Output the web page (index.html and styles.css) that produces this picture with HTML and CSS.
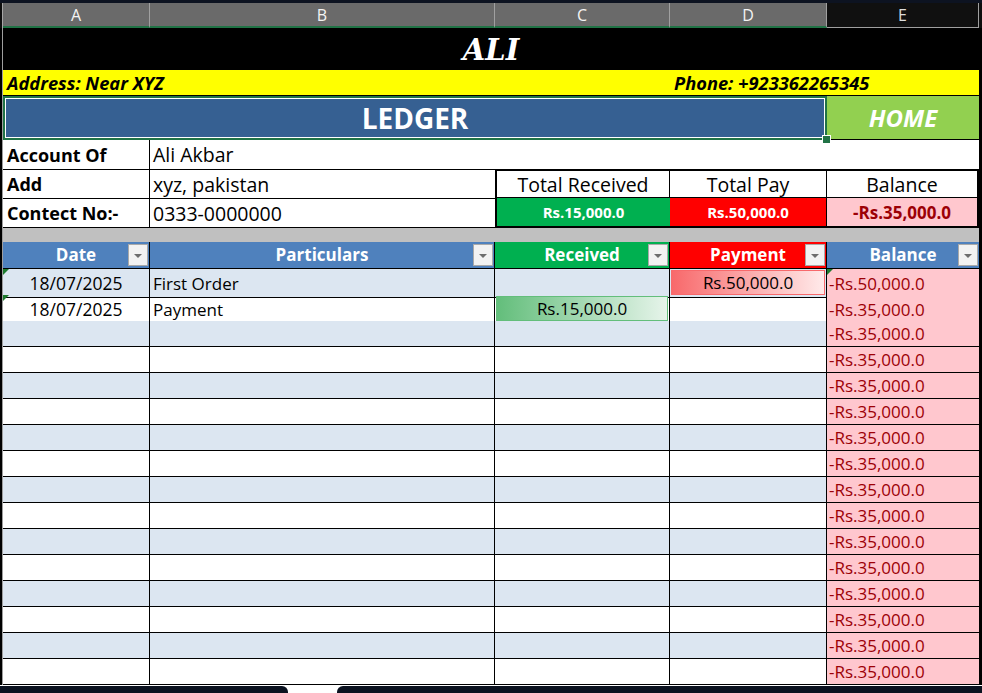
FILE: index.html
```html
<!DOCTYPE html>
<html>
<head>
<meta charset="utf-8">
<link rel="stylesheet" href="styles.css">
</head>
<body>
<div class="topstrip"></div>
<div class="colbar">
  <div class="colheads grid5">
    <div class="ch">A</div><div class="ch">B</div><div class="ch">C</div><div class="ch">D</div><div class="ch ch-e">E</div>
  </div>
</div>
<div class="sheet">
  <div class="title">ALI</div>
  <div class="info grid5">
    <div class="addr">Address: Near XYZ</div>
    <div class="phone">Phone: +923362265345</div>
  </div>
  <div class="banner grid5">
    <div class="ledger">LEDGER</div>
    <div class="home">HOME</div>
  </div>
  <div class="acct grid5">
    <div class="lab">Account Of</div><div class="val val-top">Ali Akbar</div><div class="blank"></div>
    <div class="lab">Add</div><div class="val">xyz, pakistan</div>
    <div class="totals">
      <div class="tc h">Total Received</div>
      <div class="tc h">Total Pay</div>
      <div class="tc h">Balance</div>
      <div class="tc tv-g">Rs.15,000.0</div>
      <div class="tc tv-r">Rs.50,000.0</div>
      <div class="tc tv-p">-Rs.35,000.0</div>
    </div>
    <div class="lab">Contect No:-</div><div class="val">0333-0000000</div>
  </div>
  <div class="gap"></div>
  <div class="thead grid5">
    <div class="th th-blue">Date<span class="filt"></span></div>
    <div class="th th-blue">Particulars<span class="filt"></span></div>
    <div class="th th-green">Received<span class="filt"></span></div>
    <div class="th th-red">Payment<span class="filt"></span></div>
    <div class="th th-blue">Balance<span class="filt"></span></div>
  </div>
  <div class="row grid5 alt">
    <div class="c c-date flag">18/07/2025</div><div class="c c-part">First Order</div><div class="c"></div>
    <div class="c"><div class="bar bar-red">Rs.50,000.0</div></div>
    <div class="c c-bal flag">-Rs.50,000.0</div>
  </div>
  <div class="row grid5 soft">
    <div class="c c-date flag">18/07/2025</div><div class="c c-part">Payment</div>
    <div class="c"><div class="bar bar-green">Rs.15,000.0</div></div>
    <div class="c"></div>
    <div class="c c-bal">-Rs.35,000.0</div>
  </div>
  <div class="row grid5 alt"><div class="c"></div><div class="c"></div><div class="c"></div><div class="c"></div><div class="c c-bal">-Rs.35,000.0</div></div>
  <div class="row grid5"><div class="c"></div><div class="c"></div><div class="c"></div><div class="c"></div><div class="c c-bal">-Rs.35,000.0</div></div>
  <div class="row grid5 alt"><div class="c"></div><div class="c"></div><div class="c"></div><div class="c"></div><div class="c c-bal">-Rs.35,000.0</div></div>
  <div class="row grid5"><div class="c"></div><div class="c"></div><div class="c"></div><div class="c"></div><div class="c c-bal">-Rs.35,000.0</div></div>
  <div class="row grid5 alt"><div class="c"></div><div class="c"></div><div class="c"></div><div class="c"></div><div class="c c-bal">-Rs.35,000.0</div></div>
  <div class="row grid5"><div class="c"></div><div class="c"></div><div class="c"></div><div class="c"></div><div class="c c-bal">-Rs.35,000.0</div></div>
  <div class="row grid5 alt"><div class="c"></div><div class="c"></div><div class="c"></div><div class="c"></div><div class="c c-bal">-Rs.35,000.0</div></div>
  <div class="row grid5"><div class="c"></div><div class="c"></div><div class="c"></div><div class="c"></div><div class="c c-bal">-Rs.35,000.0</div></div>
  <div class="row grid5 alt"><div class="c"></div><div class="c"></div><div class="c"></div><div class="c"></div><div class="c c-bal">-Rs.35,000.0</div></div>
  <div class="row grid5"><div class="c"></div><div class="c"></div><div class="c"></div><div class="c"></div><div class="c c-bal">-Rs.35,000.0</div></div>
  <div class="row grid5 alt"><div class="c"></div><div class="c"></div><div class="c"></div><div class="c"></div><div class="c c-bal">-Rs.35,000.0</div></div>
  <div class="row grid5"><div class="c"></div><div class="c"></div><div class="c"></div><div class="c"></div><div class="c c-bal">-Rs.35,000.0</div></div>
  <div class="row grid5 alt"><div class="c"></div><div class="c"></div><div class="c"></div><div class="c"></div><div class="c c-bal">-Rs.35,000.0</div></div>
  <div class="row grid5"><div class="c"></div><div class="c"></div><div class="c"></div><div class="c"></div><div class="c c-bal">-Rs.35,000.0</div></div>
</div>
<div class="tabs"><div class="tab-l"></div><div class="tab-r"></div></div>
</body>
</html>
```
FILE: styles.css
```css
* { box-sizing: border-box; margin: 0; padding: 0; }
html, body { background: #000; }
body {
  margin: 0;
  width: 982px;
  height: 693px;
  overflow: hidden;
  font-family: "Open Sans", "Noto Sans", sans-serif;
  color: #000;
}
.grid5 {
  display: grid;
  grid-template-columns: 147px 345px 175px 157px 152px;
}
.topstrip { height: 3px; background: #0d1321; }
.colbar { background: #0e0e0e; padding-left: 2px; height: 25px; }
.colheads { width: 977px; border-left: 1px solid #a6a6a6; height: 25px; }
.ch {
  height: 25px;
  background: #6a6a6a;
  color: #f4f4f4;
  font-size: 16px;
  line-height: 25px;
  text-align: center;
  border-right: 1px solid #a0a0a0;
  border-bottom: 2px solid #217346;
}
.ch-e {
  background: #101010;
  color: #dcdcdc;
  border-bottom: 1px solid #a0a0a0;
  border-right: 1px solid #a0a0a0;
}
.sheet {
  margin-left: 2px;
  width: 978px;
  border-left: 1px solid #9e9e9e;
  border-right: 1px solid #000;
  background: #fff;
}
.title {
  height: 42px;
  background: #000;
  color: #fff;
  font: italic 700 29px "DejaVu Serif", serif;
  line-height: 44px;
  text-align: center;
}
.info {
  height: 26px;
  background: #ffff00;
  border-bottom: 1px solid #000;
  font-weight: 700;
  font-style: italic;
  font-size: 18.3px;
  line-height: 25px;
}
.addr { grid-column: 1 / 4; padding-left: 4px; }
.phone { grid-column: 4 / 6; padding-left: 4px; }
.banner { height: 44px; }
.ledger {
  grid-column: 1 / 5;
  position: relative;
  z-index: 1;
  background: #366092;
  border: 2px solid #217346;
  box-shadow: inset 0 0 0 1px #fff;
  color: #fff;
  font-weight: 700;
  font-size: 28px;
  display: flex;
  align-items: center;
  justify-content: center;
}
.ledger::after {
  content: "";
  position: absolute;
  right: -6px;
  bottom: -6px;
  width: 7px;
  height: 7px;
  background: #217346;
  border: 1px solid #fff;
}
.home {
  background: #92d050;
  color: #fff;
  font-weight: 700;
  font-style: italic;
  font-size: 24px;
  display: flex;
  align-items: center;
  justify-content: center;
  border-bottom: 1px solid #000;
}
.acct { grid-template-rows: 30px 29px 29px; }
.lab {
  font-weight: 700;
  font-size: 18px;
  padding-left: 4px;
  border-right: 1px solid #000;
  border-bottom: 1px solid #000;
  display: flex;
  align-items: center;
}
.val {
  font-size: 19.5px;
  padding-left: 3px;
  border-bottom: 1px solid #000;
  display: flex;
  align-items: center;
}
.blank { grid-column: 3 / 6; }
.totals {
  grid-column: 3 / 6;
  grid-row: 2 / 4;
  margin-top: -1px;
  border: 2px solid #000;
  display: grid;
  grid-template-columns: 173px 157px 1fr;
  grid-template-rows: 27px 1fr;
}
.tc {
  display: flex;
  align-items: center;
  justify-content: center;
  border-right: 1px solid #000;
  font-size: 19.5px;
}
.tc:nth-child(3n) { border-right: 0; }
.tc.h { border-bottom: 1px solid #000; }
.tv-g { background: #00b050; color: #fff; font-weight: 700; font-size: 15px; border-right: 0; }
.tv-r { background: #ff0000; color: #fff; font-weight: 700; font-size: 15px; }
.tv-p { background: #ffc7ce; color: #9c0006; font-weight: 700; font-size: 17px; }
.gap { height: 14px; background: #c0c0c0; }
.thead { height: 27px; border-bottom: 1px solid #000; }
.th {
  position: relative;
  color: #fff;
  font-weight: 700;
  font-size: 17px;
  line-height: 26px;
  text-align: center;
  border-right: 1px solid #000;
}
.th:last-child { border-right: 0; }
.th-blue { background: #4f81bd; }
.th-green { background: #00b050; }
.th-red { background: #ff0000; }
.filt {
  position: absolute;
  right: 1px;
  top: 2px;
  width: 20px;
  height: 22px;
  background: #f2f2f2;
  border: 1px solid #a9a9a9;
}
.filt::after {
  content: "";
  position: absolute;
  left: 5px;
  top: 9px;
  border-left: 4px solid transparent;
  border-right: 4px solid transparent;
  border-top: 4px solid #6d6d6d;
}
.row { height: 26px; background: #fff; }
.c {
  position: relative;
  border-right: 1px solid #000;
  border-bottom: 1px solid #000;
  font-size: 17px;
  display: flex;
  align-items: center;
  white-space: nowrap;
}
.c:last-child { border-right: 0; }
.row.soft .c { border-bottom-color: #95b3d7; }
.row.soft .c.c-bal { border-bottom-color: #000; }
.row.alt .c { background: #dce6f1; }
.row .c.c-bal { background: #ffc7ce; color: #9c0006; padding-left: 2px; }
.c-date { justify-content: center; font-size: 17.5px; }
.c-part { padding-left: 3px; }
.flag::before {
  content: "";
  position: absolute;
  left: 0;
  top: 0;
  border-top: 6px solid #1d7b2e;
  border-right: 6px solid transparent;
}
.bar {
  flex: 1;
  align-self: stretch;
  margin: 1px 1px 2px 1px;
  display: flex;
  align-items: center;
  justify-content: center;
}
.bar-red { background: linear-gradient(90deg, #f8696b, #ffeaea); border: 1px solid #f8696b; }
.bar-green { background: linear-gradient(90deg, #63be7b, #e6f4ea); border: 1px solid #63be7b; }
.tabs {
  display: flex;
  height: 8px;
  background: #fff;
  padding-top: 1px;
}
.tab-l { width: 288px; background: #0b1220; border-top-right-radius: 6px; }
.tab-r { flex: 1; margin-left: 49px; background: #0b1220; border-top-left-radius: 6px; }
```
